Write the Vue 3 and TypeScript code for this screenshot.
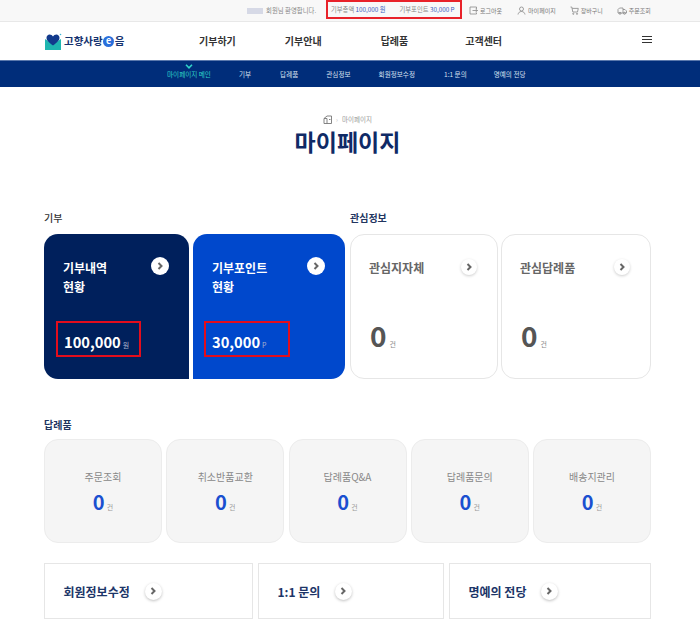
<script setup lang="ts">
const navMain: string[] = ['기부하기', '기부안내', '답례품', '고객센터']
const navSub: { label: string; cls: string }[] = [
  { label: '마이페이지 메인', cls: 'active' },
  { label: '기부', cls: 's1' },
  { label: '답례품', cls: 's2' },
  { label: '관심정보', cls: 's3' },
  { label: '회원정보수정', cls: 's4' },
  { label: '1:1 문의', cls: 's5' },
  { label: '명예의 전당', cls: 's6' }
]
const goods: string[] = ['주문조회', '취소반품교환', '답례품Q&A', '답례품문의', '배송지관리']
const links: { label: string; cls: string }[] = [
  { label: '회원정보수정', cls: 'l1' },
  { label: '1:1 문의', cls: 'l2' },
  { label: '명예의 전당', cls: 'l3' }
]
</script>

<template>
  <div class="page">
    <div class="topbar">
      <span class="blurname"></span>
      <span class="welcome">회원님 환영합니다.</span>
      <div class="redtop">
        <span>기부총액 <b>100,000 원</b></span>
        <span>기부포인트 <b>30,000 P</b></span>
      </div>
      <a class="tl t1">
        <svg width="9" height="9" viewBox="0 0 9 9" fill="none" stroke="#888" stroke-width=".8"><path d="M7.500 3V1H1v7h6.500V6.500M3.500 4.500h5M6.500 3l2 1.500-2 1.500"/></svg>
        로그아웃
      </a>
      <a class="tl t2">
        <svg width="9" height="9" viewBox="0 0 9 9" fill="none" stroke="#888" stroke-width=".8"><circle cx="4.500" cy="3" r="2"/><path d="M1 8.500c.4-2 1.700-3 3.500-3s3.100 1 3.500 3"/></svg>
        마이페이지
      </a>
      <a class="tl t3">
        <svg width="9" height="9" viewBox="0 0 9 9" fill="none" stroke="#888" stroke-width=".8"><path d="M.5 1h1.300l1 5h4.700l.8-3.600H2.200"/><circle cx="3.300" cy="7.800" r=".6"/><circle cx="7" cy="7.800" r=".6"/></svg>
        장바구니
      </a>
      <a class="tl t4">
        <svg width="10" height="9" viewBox="0 0 10 9" fill="none" stroke="#888" stroke-width=".8"><path d="M1 7V3.500L2.500 2H6v5M6 3.500h2L9.500 5v2H1"/><circle cx="3" cy="7.300" r="1"/><circle cx="7.500" cy="7.300" r="1"/></svg>
        주문조회
      </a>
    </div>

    <header class="header">
      <div class="logo">
        <svg width="18" height="17" viewBox="0 0 18 17">
          <path d="M1 6l8 5 8-5v11H1z" fill="#1fb5b0"/>
          <path d="M9 12.500C4 9 2.500 7 2.500 4.800 2.500 2.800 4 1.500 5.600 1.500 7 1.500 8.300 2.300 9 3.600 9.700 2.300 11 1.500 12.400 1.500 14 1.500 15.500 2.800 15.500 4.800 15.500 7 14 9 9 12.500z" fill="#123a8c"/>
          <circle cx="16.500" cy="1.500" r=".8" fill="#38b6d8"/>
        </svg>
        <span class="logotext">고향사랑</span>
        <span class="logoe">e</span>
        <span class="logotext">음</span>
      </div>
      <nav class="mainnav">
        <a v-for="(n, i) in navMain" :key="n" :class="'m' + i">{{ n }}</a>
      </nav>
      <div class="burger"><i></i><i></i><i></i></div>
    </header>

    <nav class="subnav">
      <a v-for="s in navSub" :key="s.label" :class="s.cls">
        <svg v-if="s.cls === 'active'" class="chev" width="8" height="5" viewBox="0 0 8 5" fill="none" stroke="#2fd3c8" stroke-width="1.600"><path d="M1 .8l3 3 3-3"/></svg>
        {{ s.label }}
      </a>
    </nav>

    <main class="main">
      <div class="crumb">
        <svg width="10" height="9" viewBox="0 0 10 9" fill="none" stroke="#777" stroke-width=".9"><path d="M1 8.500V3.500L4 1h4.500v7.500zM4 8.500V3.500M1 3.500h3M6 4.500h1.500"/></svg>
        <span class="sep">›</span>
        <span>마이페이지</span>
      </div>
      <h1 class="title">마이페이지</h1>

      <div class="toprow">
        <section class="group">
          <h2 class="sect">기부</h2>
          <div class="cards">
            <div class="card navy">
              <div class="ctitle">기부내역<br />현황</div>
              <span class="arrow a1"><svg width="7" height="8" viewBox="0 0 7 8" fill="none" stroke="#666" stroke-width="2"><path d="M1.500 1l3 3-3 3"/></svg></span>
              <div class="valbox"><b>100,000</b><small>원</small></div>
            </div>
            <div class="card blue">
              <div class="ctitle">기부포인트<br />현황</div>
              <span class="arrow a1"><svg width="7" height="8" viewBox="0 0 7 8" fill="none" stroke="#666" stroke-width="2"><path d="M1.500 1l3 3-3 3"/></svg></span>
              <div class="valbox"><b>30,000</b><small>P</small></div>
            </div>
          </div>
        </section>
        <section class="group">
          <h2 class="sect dark">관심정보</h2>
          <div class="cards">
            <div class="card line w1">
              <div class="ctitle">관심지자체</div>
              <span class="arrow a2"><svg width="7" height="8" viewBox="0 0 7 8" fill="none" stroke="#666" stroke-width="2"><path d="M1.500 1l3 3-3 3"/></svg></span>
              <div class="zero"><b>0</b><small>건</small></div>
            </div>
            <div class="card line w2">
              <div class="ctitle">관심답례품</div>
              <span class="arrow a2"><svg width="7" height="8" viewBox="0 0 7 8" fill="none" stroke="#666" stroke-width="2"><path d="M1.500 1l3 3-3 3"/></svg></span>
              <div class="zero"><b>0</b><small>건</small></div>
            </div>
          </div>
        </section>
      </div>

      <h2 class="sect dark goods-h">답례품</h2>
      <div class="goods">
        <div v-for="g in goods" :key="g" class="gcard">
          <span class="glabel">{{ g }}</span>
          <div class="gval"><b>0</b><small>건</small></div>
        </div>
      </div>

      <div class="links">
        <a v-for="l in links" :key="l.label" class="link" :class="l.cls">
          <span>{{ l.label }}</span>
          <span class="arrow a3"><svg width="7" height="8" viewBox="0 0 7 8" fill="none" stroke="#666" stroke-width="2"><path d="M1.500 1l3 3-3 3"/></svg></span>
        </a>
      </div>
    </main>
  </div>
</template>

<style scoped>
.page {
  width: 700px;
  height: 631px;
  overflow: hidden;
  background: #fff;
  font-family: "Noto Sans CJK KR", "Noto Sans", sans-serif;
  color: #333;
}
a { color: inherit; text-decoration: none; }

.topbar {
  height: 21px;
  background: #f8f8f8;
  border-bottom: 1px solid #e8e8e8;
  display: flex;
  align-items: center;
  font-size: 6px;
  color: #888;
  padding-left: 247px;
}
.blurname { width: 16px; height: 6px; background: #d6d9e6; margin-right: 3px; }
.welcome { width: 51px; white-space: nowrap; font-size: 6.400px; }
.redtop {
  margin-left: 9px;
  width: 136px;
  height: 19px;
  margin-top: -2px;
  box-sizing: border-box;
  border: 2px solid #e8222a;
  display: flex;
  align-items: center;
  gap: 14px;
  padding: 0 0 0 3px;
  white-space: nowrap;
  font-size: 6.300px;
  color: #888;
}
.redtop b { font-weight: 400; color: #3a5cc0; }
.tl { display: flex; align-items: center; gap: 2px; white-space: nowrap; color: #777; }
.t1 { margin-left: 7px; }
.t2 { margin-left: 15px; }
.t3 { margin-left: 14px; }
.t4 { margin-left: 14px; }

.header {
  height: 38px;
  display: flex;
  align-items: center;
  padding-left: 44px;
}
.logo { display: flex; align-items: center; width: 155px; flex: none; }
.logo svg { margin-right: 2px; }
.logotext { font-size: 10.500px; font-weight: 700; color: #16336f; line-height: 1; }
.logoe {
  width: 11px;
  height: 11px;
  border-radius: 50%;
  background: #2a6fdb;
  color: #fff;
  font-size: 9px;
  line-height: 10px;
  font-weight: 700;
  text-align: center;
  margin: 0 0.500px;
}
.mainnav { display: flex; font-size: 10px; font-weight: 700; color: #333; white-space: nowrap; margin-top: -2px; }
.m1 { margin-left: 49px; }
.m2 { margin-left: 59px; }
.m3 { margin-left: 57px; }
.burger { margin-left: auto; margin-right: 48px; width: 10px; display: flex; flex-direction: column; gap: 2px; margin-top: -4px; }
.burger i { display: block; height: 1px; background: #333; }

.subnav {
  height: 27px;
  background: #002d7a;
  border-top: 1px solid #5a78ac;
  box-sizing: border-box;
  display: flex;
  align-items: center;
  padding-left: 167px;
  font-size: 6.600px;
  color: #d7e0ef;
  white-space: nowrap;
}
.subnav a { position: relative; }
.subnav .active { color: #2fd3c8; }
.chev { position: absolute; left: 18px; top: -5px; }
.s1 { margin-left: 28px; }
.s2 { margin-left: 29px; }
.s3 { margin-left: 28px; }
.s4 { margin-left: 28px; }
.s5 { margin-left: 29px; }
.s6 { margin-left: 27px; }

.main { padding: 27px 49px 0 44px; }
.crumb {
  display: flex;
  align-items: center;
  justify-content: center;
  gap: 3px;
  font-size: 6.500px;
  line-height: 10px;
  color: #999;
}
.sep { color: #bbb; margin-right: 1px; }
.title {
  margin: 0;
  font-size: 23px;
  line-height: 34px;
  font-weight: 700;
  color: #0f2a66;
  text-align: center;
  height: 34px;
}
.toprow { display: flex; gap: 5px; margin-top: 53px; }
.group { display: flex; flex-direction: column; }
.sect {
  margin: 0 0 9px;
  font-size: 10px;
  line-height: 14px;
  font-weight: 500;
  color: #333;
}
.sect.dark { color: #22355f; font-weight: 700; }
.cards { display: flex; gap: 4px; }
.card {
  position: relative;
  box-sizing: border-box;
  height: 145px;
  border-radius: 14px;
  padding: 24px 0 0 19px;
}
.navy { width: 145px; background: #00205c; color: #fff; border-radius: 14px 14px 0 14px; }
.blue { width: 152px; background: #0048cc; color: #fff; border-radius: 14px 14px 14px 0; }
.line { background: #fff; border: 1px solid #e6e6e6; color: #666; padding: 23px 0 0 18px; }
.w1 { width: 148px; }
.w2 { width: 150px; margin-left: -1px; }
.ctitle { font-size: 12px; line-height: 19px; font-weight: 700; }
.arrow {
  position: absolute;
  display: flex;
  align-items: center;
  justify-content: center;
  border-radius: 50%;
  background: #fff;
}
.a1 { width: 18px; height: 18px; top: 23px; right: 20px; }
.a2 { width: 16px; height: 16px; top: 24px; right: 20px; box-shadow: 0 1px 3px rgba(0, 0, 0, .2); }
.valbox {
  position: absolute;
  left: 12px;
  top: 87px;
  box-sizing: border-box;
  width: 85px;
  height: 36px;
  border: 2px solid #e30d1c;
  display: flex;
  align-items: baseline;
  padding: 7px 0 0 6px;
}
.blue .valbox { left: 11px; width: 86px; }
.valbox b { font-size: 14.700px; line-height: 24px; font-weight: 700; color: #fff; }
.valbox small { font-size: 7px; margin-left: 2px; color: #a7b2cc; }
.zero {
  position: absolute;
  left: 19px;
  top: 79px;
  display: flex;
  align-items: baseline;
}
.zero b { font-size: 28px; line-height: 42px; font-weight: 700; color: #555; }
.zero small { font-size: 7px; margin-left: 3px; color: #888; }

.sect.goods-h { margin: 39px 0 7px; }
.goods { display: flex; gap: 4px; justify-content: space-between; }
.gcard {
  box-sizing: border-box;
  width: 118px;
  height: 104px;
  background: #f5f5f5;
  border: 1px solid #ececec;
  border-radius: 14px;
  display: flex;
  flex-direction: column;
  align-items: center;
  padding-top: 29px;
}
.glabel { font-size: 10px; line-height: 16px; color: #888; }
.gval { display: flex; align-items: baseline; margin-top: 3px; }
.gval b { font-size: 20px; line-height: 27px; font-weight: 700; color: #1a4fd0; }
.gval small { font-size: 7px; margin-left: 2px; color: #999; }

.links { display: flex; gap: 5px; margin-top: 20px; }
.link {
  box-sizing: border-box;
  height: 56px;
  border: 1px solid #e6e6e6;
  display: flex;
  align-items: center;
  padding-left: 18.500px;
  font-size: 12px;
  font-weight: 700;
  color: #1c3568;
  gap: 15px;
  white-space: nowrap;
}
.l1 { width: 209px; }
.l2 { width: 186px; }
.l3 { width: 202px; }
.a3 { position: static; width: 17px; height: 17px; box-shadow: 0 1px 3px rgba(0, 0, 0, .25); }
</style>
